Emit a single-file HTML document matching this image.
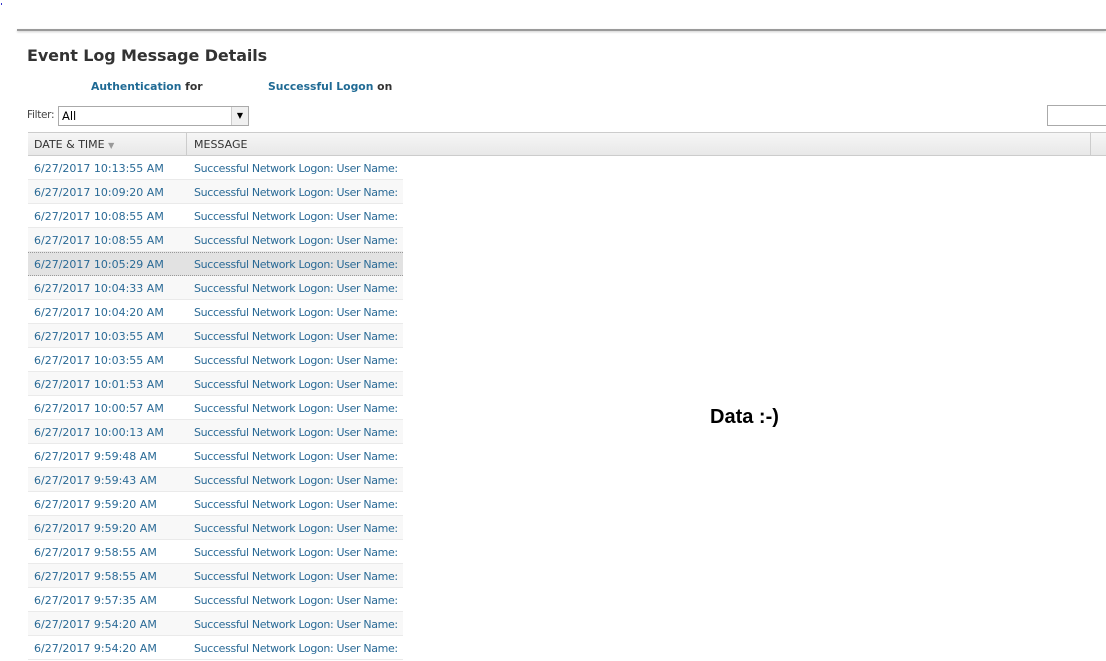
<!DOCTYPE html>
<html><head><style>
body{margin:0;width:1106px;height:661px;overflow:hidden;background:#fff;font-family:"DejaVu Sans","Liberation Sans",sans-serif;position:relative}
.topline{position:absolute;left:17px;top:29px;width:1089px;height:2px;background:#9a9a9a;box-shadow:0 1px 2px #ccc}
h1{position:absolute;left:27px;top:46px;margin:0;font-size:16px;font-weight:bold;color:#333;letter-spacing:-0.1px}
.sub{position:absolute;top:80px;font-size:10.8px;font-weight:bold;color:#333}
.sub b{color:#1f6a94}
.filter{position:absolute;left:27px;top:109px;font-size:10.5px;color:#444;letter-spacing:-0.3px}
.sel{position:absolute;left:58px;top:106px;width:191px;height:20px;border:1px solid #aaa;box-sizing:border-box;font-size:11.5px;color:#000;padding-left:3px;line-height:19px}
.sel span{position:absolute;right:0;top:0;width:16px;height:18px;border-left:1px solid #ccc;background:#f0f0f0;font-size:8px;text-align:center;line-height:18px}
.search{position:absolute;left:1047px;top:105px;width:70px;height:21px;border:1px solid #aaa;box-sizing:border-box}
.hdr{position:absolute;left:28px;top:132px;width:1078px;height:24px;border-top:1px solid #ccc;border-bottom:1px solid #ccc;box-sizing:border-box;background:linear-gradient(#f6f6f6,#e8e8e8);font-size:11px;color:#333}
.hdr div{position:absolute;top:1px;line-height:22px}
.row{position:absolute;left:28px;width:375px;height:24px;border-bottom:1px solid #eaeaea;box-sizing:border-box;font-size:11px;color:#2a6a96;line-height:25px;white-space:nowrap;overflow:hidden}
.row span{position:absolute}
.msg{letter-spacing:-0.35px}
.data{position:absolute;left:710px;top:406px;font-family:"Liberation Sans",sans-serif;font-weight:bold;font-size:20px;color:#000}
</style></head><body>
<div style="position:absolute;left:1px;top:3px;width:1px;height:2px;background:#33c"></div>
<div class="topline"></div>
<h1>Event Log Message Details</h1>
<div class="sub" style="left:91px"><b>Authentication</b> for</div>
<div class="sub" style="left:268px"><b>Successful Logon</b> on</div>
<div class="filter">Filter:</div>
<div class="sel">All<span>&#9660;</span></div>
<div class="search"></div>
<div class="hdr">
<div style="left:6px">DATE &amp; TIME <span style="color:#999;font-size:8px">&#9660;</span></div>
<div style="left:158px;width:1px;height:22px;background:#ccc;top:0"></div>
<div style="left:166px">MESSAGE</div>
<div style="left:1062px;width:1px;height:22px;background:#ccc;top:0"></div>
</div>
<div id="rows"></div>
<div class="data">Data :-)</div>
<script>
var t=["10:13:55","10:09:20","10:08:55","10:08:55","10:05:29","10:04:33","10:04:20","10:03:55","10:03:55","10:01:53","10:00:57","10:00:13","9:59:48","9:59:43","9:59:20","9:59:20","9:58:55","9:58:55","9:57:35","9:54:20","9:54:20"];
var h="";
for(var i=0;i<t.length;i++){
var bg=i==4?"#e2e2e2":(i%2?"#f8f8f8":"#fff");
var bd=i==4?"border-top:1px dotted #999;border-bottom:1px dotted #999;line-height:23px;":"";
h+='<div class="row" style="top:'+(156+i*24)+'px;background:'+bg+';'+bd+'"><span style="left:6px">6/27/2017 '+t[i]+' AM</span><span class="msg" style="left:166px">Successful Network Logon: User Name:</span></div>';
}
document.getElementById("rows").innerHTML=h;
</script>
</body></html>
